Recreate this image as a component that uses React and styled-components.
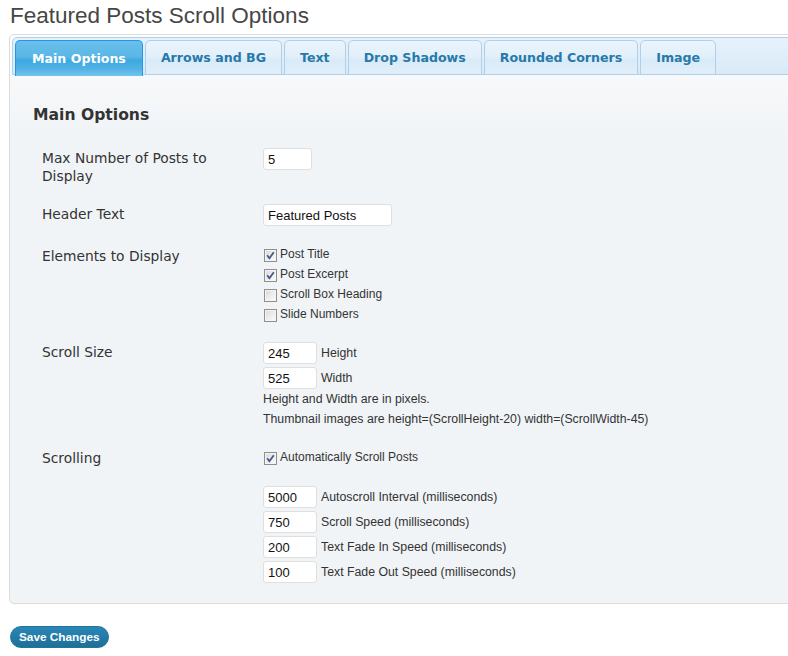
import React from "react";
import styled, { createGlobalStyle } from "styled-components";

const Global = createGlobalStyle`
  html, body { margin: 0; padding: 0; background: #fff; overflow: hidden; }
  body { font-family: "Liberation Sans", Arial, sans-serif; color: #333; }
`;

const Page = styled.div`
  padding: 0 0 0 9px;
  width: 840px;
`;

const Title = styled.h2`
  margin: 0;
  padding: 4px 0 0 1px;
  height: 30px;
  font-family: "Liberation Sans", Arial, sans-serif;
  font-weight: normal;
  font-size: 22.5px;
  line-height: 24px;
  color: #464646;
`;

const Tabs = styled.div`
  border: 1px solid #dcdcdc;
  border-radius: 5px;
  padding: 2px;
  background: linear-gradient(#ffffff 0px, #f7f9fa 40px, #f1f4f7 100px, #f1f4f7 100%);
`;

const Nav = styled.ul`
  display: flex;
  list-style: none;
  margin: 0;
  padding: 2px 2px 0 2px;
  height: 34px;
  border: 1px solid #aed0ea;
  border-radius: 5px 5px 0 0;
  background: linear-gradient(#e6f1fa 0%, #e0eef9 50%, #d8eaf7 100%);
`;

const Tab = styled.li`
  margin: 0 2px 0 0;
  padding: 0 ${p => (p.$active ? 16 : 15)}px;
  height: ${p => (p.$active ? 35 : 33)}px;
  display: flex;
  align-items: center;
  border: 1px solid ${p => (p.$active ? "#2694e8" : "#aed0ea")};
  border-bottom: ${p => (p.$active ? "0" : "1px solid #aed0ea")};
  border-radius: 5px 5px 0 0;
  font-family: "DejaVu Sans", Verdana, sans-serif;
  font-weight: bold;
  font-size: 12.6px;
  color: ${p => (p.$active ? "#ffffff" : "#2779aa")};
  background: ${p =>
    p.$active
      ? "linear-gradient(#68bfea 0%, #5bb7e6 44%, #3ba8e1 56%, #52b3e5 80%, #72c4ec 100%)"
      : "linear-gradient(#e9f4fc 0%, #e3f0fa 46%, #d9ebf8 56%, #e0eef9 100%)"};
  position: relative;
  z-index: 1;
`;

const Content = styled.div`
  padding: 30px 21px 18px 21px;
`;

const Heading = styled.h3`
  margin: 0 0 23px 0;
  font-family: "DejaVu Sans", Verdana, sans-serif;
  font-weight: bold;
  font-size: 15.6px;
  line-height: 20px;
  color: #333;
`;

const Form = styled.div`
  display: flex;
  flex-direction: column;
  gap: 18px;
  padding-left: 9px;
`;

const Row = styled.div`
  display: grid;
  grid-template-columns: 221px 1fr;
  align-items: start;
`;

const Label = styled.div`
  font-family: "DejaVu Sans", Verdana, sans-serif;
  font-size: 13.8px;
  line-height: 18px;
  color: #333;
  padding-top: ${p => p.$pt}px;
  padding-bottom: 1px;
  padding-right: 16px;
`;

const Field = styled.div`
  display: flex;
  flex-direction: column;
`;

const TextInput = styled.input`
  box-sizing: border-box;
  width: ${p => p.$w}px;
  height: 22px;
  margin: 0;
  padding: 0 4px;
  border: 1px solid #dfdfdf;
  border-radius: 3px;
  background: #fff;
  font-family: "Liberation Sans", Arial, sans-serif;
  font-size: 13px;
  color: #111;
  outline: none;
`;

const InputLine = styled.div`
  display: flex;
  align-items: center;
  gap: 4px;
  margin-bottom: ${p => (p.$last ? 0 : 3)}px;
`;

const SmallText = styled.span`
  font-family: "Liberation Sans", Arial, sans-serif;
  font-size: 12.3px;
  color: #333;
`;

const Note = styled.div`
  font-family: "Liberation Sans", Arial, sans-serif;
  font-size: 12.3px;
  line-height: 20px;
  color: #333;
`;

const CheckLine = styled.label`
  display: flex;
  align-items: center;
  height: 20px;
  gap: 3px;
  padding-left: 1px;
  font-family: "Liberation Sans", Arial, sans-serif;
  font-size: 12px;
  color: #333;
`;

const Box = styled.span`
  box-sizing: border-box;
  width: 13px;
  height: 13px;
  margin-top: 2px;
  border: 1px solid #8f8f8f;
  background: linear-gradient(135deg, #d6d6d6 0%, #ececec 50%, #fcfcfc 100%);
  box-shadow: inset 0 0 0 1px #f4f4f4;
  display: inline-flex;
  align-items: center;
  justify-content: center;
`;

const Spacer = styled.div`
  height: 19px;
`;

const SaveButton = styled.button`
  margin: 22px 0 0 1px;
  height: 22px;
  padding: 0 8px;
  border: 1px solid #21759b;
  border-radius: 11px;
  background: linear-gradient(#2a87b7 0%, #237ba8 50%, #1f6f97 100%);
  color: #fff;
  font-family: "Liberation Sans", Arial, sans-serif;
  font-weight: bold;
  font-size: 11.8px;
  line-height: 20px;
  cursor: pointer;
`;

function Check({ checked, children }) {
  return (
    <CheckLine>
      <Box>
        {checked && (
          <svg width="9" height="9" viewBox="0 0 9 9">
            <path d="M1.2 4.2 L3.4 7.2 L7.8 1.2" fill="none" stroke="#44588f" strokeWidth="1.8" />
          </svg>
        )}
      </Box>
      {children}
    </CheckLine>
  );
}

const tabs = ["Main Options", "Arrows and BG", "Text", "Drop Shadows", "Rounded Corners", "Image"];

export default function App() {
  return (
    <Page>
      <Global />
      <Title>Featured Posts Scroll Options</Title>
      <Tabs>
        <Nav>
          {tabs.map((t, i) => (
            <Tab key={t} $active={i === 0}>{t}</Tab>
          ))}
        </Nav>
        <Content>
          <Heading>Main Options</Heading>
          <Form>
            <Row>
              <Label $pt={1}>Max Number of Posts to Display</Label>
              <Field>
                <TextInput $w={49} defaultValue="5" />
              </Field>
            </Row>
            <Row>
              <Label $pt={1}>Header Text</Label>
              <Field>
                <TextInput $w={129} defaultValue="Featured Posts" />
              </Field>
            </Row>
            <Row>
              <Label $pt={3}>Elements to Display</Label>
              <Field>
                <Check checked>Post Title</Check>
                <Check checked>Post Excerpt</Check>
                <Check>Scroll Box Heading</Check>
                <Check>Slide Numbers</Check>
              </Field>
            </Row>
            <Row>
              <Label $pt={1}>Scroll Size</Label>
              <Field>
                <InputLine>
                  <TextInput $w={54} defaultValue="245" />
                  <SmallText>Height</SmallText>
                </InputLine>
                <InputLine $last>
                  <TextInput $w={54} defaultValue="525" />
                  <SmallText>Width</SmallText>
                </InputLine>
                <Note>Height and Width are in pixels.</Note>
                <Note>Thumbnail images are height=(ScrollHeight-20) width=(ScrollWidth-45)</Note>
              </Field>
            </Row>
            <Row>
              <Label $pt={2}>Scrolling</Label>
              <Field>
                <Check checked>Automatically Scroll Posts</Check>
                <Spacer />
                <InputLine>
                  <TextInput $w={54} defaultValue="5000" />
                  <SmallText>Autoscroll Interval (milliseconds)</SmallText>
                </InputLine>
                <InputLine>
                  <TextInput $w={54} defaultValue="750" />
                  <SmallText>Scroll Speed (milliseconds)</SmallText>
                </InputLine>
                <InputLine>
                  <TextInput $w={54} defaultValue="200" />
                  <SmallText>Text Fade In Speed (milliseconds)</SmallText>
                </InputLine>
                <InputLine $last>
                  <TextInput $w={54} defaultValue="100" />
                  <SmallText>Text Fade Out Speed (milliseconds)</SmallText>
                </InputLine>
              </Field>
            </Row>
          </Form>
        </Content>
      </Tabs>
      <SaveButton>Save Changes</SaveButton>
    </Page>
  );
}
